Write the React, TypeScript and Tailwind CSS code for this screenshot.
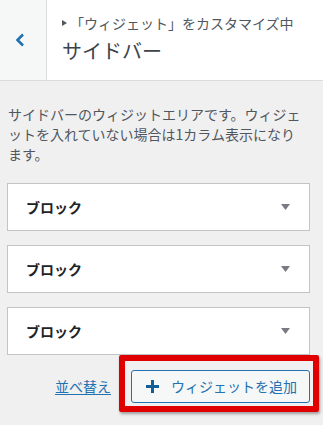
import React from 'react'

const font = { fontFamily: '"Noto Sans CJK JP", "Noto Sans", sans-serif' }

const WidgetBox: React.FC<{ title: string }> = ({ title }) => (
  <div className="ml-[7px] flex h-[48px] w-[303px] items-center justify-between border border-[#c3c4c7] bg-white pl-[18px] pr-[19px]">
    <span className="text-[14px] font-bold text-[#1d2327]">{title}</span>
    <svg width="9" height="6" viewBox="0 0 9 6">
      <path d="M0 0h9L4.5 6z" fill="#787c82" />
    </svg>
  </div>
)

export default function App() {
  return (
    <div className="relative h-[425px] w-[323px] overflow-hidden bg-[#f0f0f1]" style={font}>
      {/* Header */}
      <div className="flex h-[81px] border-b border-[#dcdcde] bg-white">
        <div className="flex w-[47px] items-center border-r border-[#dcdcde] bg-[#f6f7f7] pl-[15px]">
          <svg width="10" height="14" viewBox="0 0 10 14">
            <path d="M8 1.5 2.5 7 8 12.5" fill="none" stroke="#2271b1" strokeWidth="2.6" />
          </svg>
        </div>
        <div className="flex flex-col pl-[15px] pt-[13px]">
          <div className="flex items-center text-[14px] leading-[20px] text-[#50575e]">
            <svg width="5" height="6" viewBox="0 0 5 6" className="mr-[3px]">
              <path d="M0 0l5 3-5 3z" fill="#50575e" />
            </svg>
            <span>「ウィジェット」をカスタマイズ中</span>
          </div>
          <div className="mt-[4px] text-[20px] leading-[28px] text-[#3c434a]">サイドバー</div>
        </div>
      </div>

      {/* Body */}
      <div className="pt-[23px]">
        <p className="w-[305px] pl-2 text-[14px] leading-[20px] text-[#50575e]">
          サイドバーのウィジットエリアです。ウィジェットを入れていない場合は1カラム表示になります。
        </p>

        <div className="mt-[19px] flex flex-col gap-[14px]">
          <WidgetBox title="ブロック" />
          <WidgetBox title="ブロック" />
          <WidgetBox title="ブロック" />
        </div>

        <div className="mt-[15px] flex items-center">
          <a href="#" className="ml-[55px] text-[14px] text-[#2271b1] underline underline-offset-2">
            並べ替え
          </a>
          <button className="ml-[20px] flex h-[33px] w-[179px] items-center rounded-[3px] border border-[#2271b1] bg-[#f6f7f7] pl-[14px] text-[14px] text-[#2271b1]">
            <svg width="13" height="13" viewBox="0 0 13 13" className="mr-[12px]">
              <path d="M6.5 0v13M0 6.5h13" stroke="#135e96" strokeWidth="3" />
            </svg>
            ウィジェットを追加
          </button>
        </div>
      </div>

      {/* Annotation highlight */}
      <div className="pointer-events-none absolute left-[119px] top-[355px] h-[57px] w-[200px] rounded-[2px] border-[6px] border-[#e00000] shadow-[1px_2px_3px_rgba(0,0,0,0.35)]" />
    </div>
  )
}
